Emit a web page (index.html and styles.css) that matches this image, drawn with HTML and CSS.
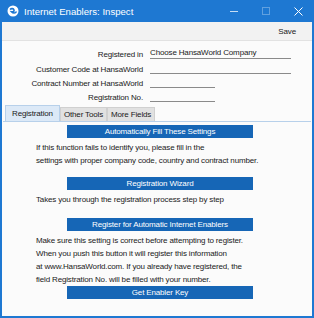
FILE: index.html
```html
<!DOCTYPE html>
<html lang="en">
<head>
    <meta charset="UTF-8">
    <title>Internet Enablers: Inspect</title>
    <link rel="stylesheet" href="styles.css">
</head>
<body>
    <div class="window">
        <div class="titlebar">
            <svg class="app-icon" width="12" height="12" viewBox="0 0 12 12">
                <circle cx="6" cy="6" r="5.5" fill="#fff"/>
                <path d="M3 4.5 C4.5 3 6.5 3.5 7 5 C7.5 6.5 6 7 4.5 6.8 C6 8.5 8.5 8.5 9.5 6.5" fill="none" stroke="#1e78d2" stroke-width="1.6"/>
            </svg>
            <span class="title">Internet Enablers: Inspect</span>
            <div class="win-controls">
                <span class="ctl ctl-min"></span>
                <span class="ctl ctl-max"></span>
                <svg class="ctl-close" width="9" height="9" viewBox="0 0 9 9">
                    <path d="M0.5 0.5 L8.5 8.5 M8.5 0.5 L0.5 8.5" stroke="#fff" stroke-width="1"/>
                </svg>
            </div>
        </div>

        <div class="toolbar">
            <span class="tool-btn">Save</span>
        </div>

        <div class="header-fields">
            <div class="field-row">
                <label>Registered in</label>
                <span class="field field-wide">Choose HansaWorld Company</span>
            </div>
            <div class="field-row">
                <label>Customer Code at HansaWorld</label>
                <span class="field field-wide"></span>
            </div>
            <div class="field-row">
                <label>Contract Number at HansaWorld</label>
                <span class="field field-short"></span>
            </div>
            <div class="field-row">
                <label>Registration No.</label>
                <span class="field field-short"></span>
            </div>
        </div>

        <div class="tabs">
            <span class="tab tab-active">Registration</span>
            <span class="tab">Other Tools</span>
            <span class="tab">More Fields</span>
        </div>

        <div class="tab-panel">
            <div class="action-btn">Automatically Fill These Settings</div>
            <p class="info info-fill">If this function fails to identify you, please fill in the<br>settings with proper company code, country and contract number.</p>

            <div class="action-btn">Registration Wizard</div>
            <p class="info info-wizard">Takes you through the registration process step by step</p>

            <div class="action-btn">Register for Automatic Internet Enablers</div>
            <p class="info info-register">Make sure this setting is correct before attempting to register.<br>When you push this button it will register this information<br>at www.HansaWorld.com. If you already have registered, the<br>field Registration No. will be filled with your number.</p>

            <div class="action-btn">Get Enabler Key</div>
        </div>
    </div>
</body>
</html>
```

FILE: styles.css
```css
body {
    margin: 0;
    font-family: "Liberation Sans", "DejaVu Sans", sans-serif;
    font-size: 8px;
    letter-spacing: -0.15px;
    color: #1a1a1a;
    background: #ffffff;
}
.window {
    width: 314px;
    height: 318px;
    box-sizing: border-box;
    border: 2px solid #1e78d2;
    border-top: none;
    background: #fbfbfb;
    display: flex;
    flex-direction: column;
    overflow: hidden;
}
.titlebar {
    height: 22px;
    margin: 0 -2px;
    background: #1e78d2;
    display: flex;
    align-items: center;
    padding-left: 7px;
    color: #ffffff;
}
.app-icon {
    margin-right: 5px;
}
.title {
    font-size: 9.6px;
    letter-spacing: 0;
    flex: 1;
}
.win-controls {
    display: flex;
    align-items: center;
}
.ctl {
    width: 32px;
    display: flex;
    justify-content: center;
}
.ctl-min::after {
    content: "";
    width: 8px;
    height: 1px;
    background: #ffffff;
    opacity: 0.75;
}
.ctl-max::after {
    content: "";
    width: 6px;
    height: 6px;
    border: 1px solid #ffffff;
    opacity: 0.3;
}
.ctl-close {
    margin: 0 11px 0 12px;
}
.toolbar {
    height: 18px;
    background: #f2f2f2;
    border-bottom: 1px solid #e2e2e2;
    display: flex;
    justify-content: flex-end;
    align-items: center;
    padding-right: 16px;
}
.header-fields {
    display: flex;
    flex-direction: column;
    gap: 2px;
    padding-top: 6px;
    height: 58px;
}
.field-row {
    display: flex;
    align-items: flex-end;
    height: 12.3px;
}
.field-row label {
    width: 141px;
    text-align: right;
    padding-right: 7px;
}
.field {
    border-bottom: 1px solid #8a8a8a;
    height: 11px;
    line-height: 11px;
    white-space: nowrap;
}
.field-wide {
    width: 141px;
}
.field-short {
    width: 65px;
}
.tabs {
    display: flex;
    align-items: flex-end;
    padding-left: 3px;
    height: 16px;
}
.tab {
    height: 13px;
    line-height: 13px;
    padding: 0 3px;
    background: #e1e1e1;
    border: 1px solid #d0d0d0;
    border-bottom: none;
}
.tab-active {
    height: 15px;
    line-height: 15px;
    background: #dce9f7;
    border-color: #b7d0ea;
    padding: 0 6px;
}
.tab-panel {
    flex: 1;
    margin: 0 1px 6px;
    border-top: 1px solid #b7d0ea;
    padding: 3px 0 0 33px;
}
.action-btn {
    width: 186px;
    height: 13px;
    line-height: 13px;
    margin-left: 31px;
    background: #1666b6;
    color: #ffffff;
    text-align: center;
}
.info {
    line-height: 13px;
    white-space: nowrap;
}
.info-fill {
    margin: 3px 0 10px;
}
.info-wizard {
    margin: 3px 0 12px;
}
.info-register {
    margin: 3px 0 0;
}
```
